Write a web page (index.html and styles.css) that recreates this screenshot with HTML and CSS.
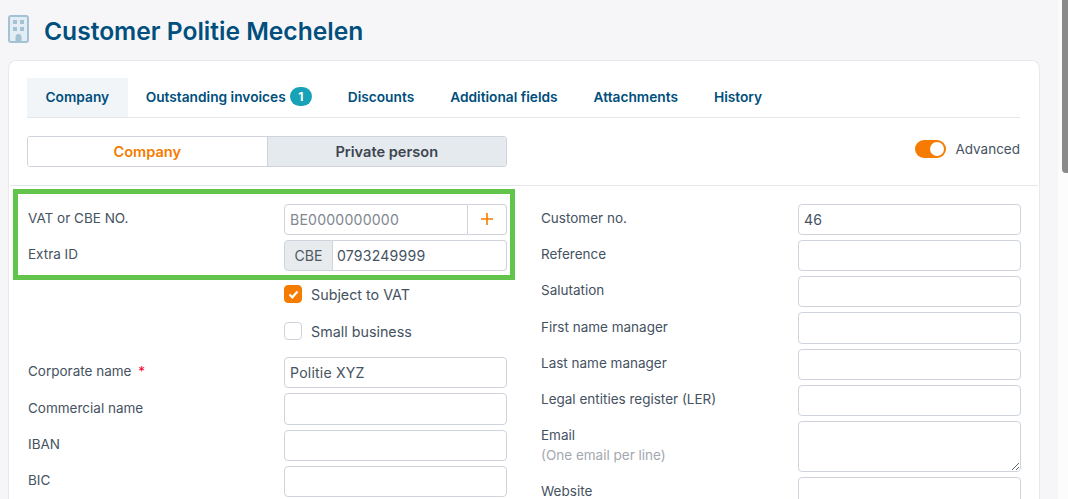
FILE: index.html
```html
<!DOCTYPE html>
<html lang="en">
<head>
<meta charset="utf-8">
<title>Customer Politie Mechelen</title>
<link rel="stylesheet" href="styles.css">
</head>
<body>
<div class="page">
  <main class="main">
    <header class="title-row">
      <svg class="title-icon" width="21" height="28" viewBox="0 0 21 28" aria-hidden="true">
        <rect x="1" y="1" width="19" height="26" rx="2" fill="#e3edf3" stroke="#a3c2d4" stroke-width="2"/>
        <rect x="5" y="5" width="4" height="4" fill="#a3c2d4"/>
        <rect x="12" y="5" width="4" height="4" fill="#a3c2d4"/>
        <rect x="5" y="12" width="4" height="4" fill="#a3c2d4"/>
        <rect x="12" y="12" width="4" height="4" fill="#a3c2d4"/>
        <path d="M7.500 27v-5a3 3 0 0 1 6 0v5z" fill="#a3c2d4"/>
      </svg>
      <h1 class="title">Customer Politie Mechelen</h1>
    </header>
    <section class="card">
      <div class="card-top">
        <nav class="tabs">
          <a class="tab tab-active">Company</a>
          <a class="tab">Outstanding invoices <span class="badge">1</span></a>
          <a class="tab">Discounts</a>
          <a class="tab">Additional fields</a>
          <a class="tab">Attachments</a>
          <a class="tab">History</a>
        </nav>
        <div class="type-row">
          <div class="segmented">
            <div class="segment segment-on">Company</div>
            <div class="segment segment-off">Private person</div>
          </div>
          <div class="advanced">
            <span class="switch"><span class="knob"></span></span>
            <span>Advanced</span>
          </div>
        </div>
      </div>
      <div class="form">
        <div class="col">
          <div class="row"><label class="label">VAT or CBE NO.</label>
            <div class="group"><input class="input join-right" placeholder="BE0000000000"><button class="plus"><svg width="12" height="12" viewBox="0 0 12 12"><path d="M6 0v12M0 6h12" stroke="#f57c00" stroke-width="1.600" fill="none"/></svg></button></div></div>
          <div class="row"><label class="label">Extra ID</label>
            <div class="group"><span class="prefix">CBE</span><input class="input join-left tight" value="0793249999"></div></div>
          <div class="check-row check-first"><span class="box box-on"><svg width="11" height="9" viewBox="0 0 11 9"><path d="M1.500 4.500l2.800 2.800 5.200-5.800" fill="none" stroke="#fff" stroke-width="2.200"/></svg></span><span>Subject to VAT</span></div>
          <div class="check-row check-second"><span class="box"></span><span>Small business</span></div>
          <div class="row"><label class="label">Corporate name <span class="req">*</span></label><input class="input" value="Politie XYZ"></div>
          <div class="row"><label class="label">Commercial name</label><input class="input"></div>
          <div class="row"><label class="label">IBAN</label><input class="input"></div>
          <div class="row"><label class="label">BIC</label><input class="input"></div>
        </div>
        <div class="col col-right">
          <div class="row"><label class="label">Customer no.</label><input class="input" value="46"></div>
          <div class="row"><label class="label">Reference</label><input class="input"></div>
          <div class="row"><label class="label">Salutation</label><input class="input"></div>
          <div class="row"><label class="label">First name manager</label><input class="input"></div>
          <div class="row"><label class="label">Last name manager</label><input class="input"></div>
          <div class="row"><label class="label">Legal entities register (LER)</label><input class="input"></div>
          <div class="row"><label class="label">Email<small class="hint">(One email per line)</small></label><textarea class="input area"></textarea></div>
          <div class="row"><label class="label">Website</label><input class="input"></div>
        </div>
        <div class="highlight"></div>
      </div>
    </section>
  </main>
  <div class="scrollbar"><div class="thumb"></div></div>
</div>
</body>
</html>
```
FILE: styles.css
```css
* { box-sizing: border-box; }
html, body { margin: 0; height: 499px; overflow: hidden; }
body { font-family: Inter, "Liberation Sans", sans-serif; font-size: 13.5px; color: #45525f; background: #f6f6f9; }
.page { display: flex; height: 499px; }
.main { width: 1050px; padding-left: 8px; flex: none; }
.title-row { display: flex; align-items: center; height: 60px; gap: 15px; }
.title-icon { flex: none; margin-bottom: 2px; }
.title { margin: 1px 0 0; font-size: 24.6px; font-weight: 600; color: #004f7c; line-height: 30px; }
.card { width: 1032px; height: 460px; background: #fff; border: 1px solid #e8eaee; border-bottom: 0; border-radius: 8px 8px 0 0; }
.card-top { padding: 17px 18px 18px; border-bottom: 1px solid #e4e6ea; margin: 0 1px; height: 125px; }
.tabs { display: flex; height: 40px; border-bottom: 1px solid #e4e7eb; margin: 0 0 18px -1px; }
.tab { display: flex; align-items: center; gap: 4px; padding: 0 18px 2px; font-size: 13.72px; font-weight: 600; color: #004f7c; height: 39px; }
.tab-active { background: #f2f5f8; padding: 0 18.500px 2px; }
.badge { display: inline-flex; justify-content: center; align-items: center; width: 22px; height: 19px; border-radius: 10px; background: #17a2b8; color: #fff; font-size: 12px; font-weight: 700; }
.type-row { display: flex; justify-content: space-between; align-items: flex-start; margin-left: -1px; }
.segmented { display: flex; width: 480px; height: 31px; border: 1px solid #cfd4dc; border-radius: 3px; overflow: hidden; font-size: 14.6px; font-weight: 600; }
.segment { flex: 1; display: flex; align-items: center; justify-content: center; }
.segment-on { color: #f57c00; background: #fff; border-right: 1px solid #cfd4dc; }
.segment-off { color: #3d4550; background: #e5eaee; }
.advanced { display: flex; align-items: center; gap: 9px; margin-top: 4px; height: 18px; }
.switch { display: flex; justify-content: flex-end; align-items: center; width: 31px; height: 18px; padding-right: 2px; background: #f57c00; border-radius: 9px; }
.knob { width: 14px; height: 14px; border-radius: 50%; background: #fff; }
.form { position: relative; display: flex; padding: 17.700px 18px 0 19px; }
.col { width: 479px; flex: none; }
.col-right { width: 480px; margin-left: 34px; }
.row { display: flex; align-items: flex-start; justify-content: space-between; margin-bottom: 5px; }
.label { display: block; padding-top: 6.300px; line-height: 16px; }
.req { color: #ff0033; margin-left: 3px; }
.hint { display: block; color: #a3a8ae; font-size: 13.5px; margin-top: 4px; }
.input { display: block; width: 223px; height: 31.25px; padding: 0 5px; border: 1px solid #cfd4dc; border-radius: 4px; font: 14.1px Inter, "Liberation Sans", sans-serif; color: #45525f; letter-spacing: 0.2px; background: #fff; outline: none; margin: 0; }
.input::placeholder { color: #7f8790; opacity: 1; }
.area { height: 51px; resize: both; }
.group { display: flex; width: 223px; height: 31.25px; }
.group .input { flex: 1; width: auto; min-width: 0; }
.join-right { border-radius: 4px 0 0 4px; }
.join-left { border-radius: 0 4px 4px 0; border-left: 0; }
.tight { padding-left: 4px; }
.plus { display: flex; align-items: center; justify-content: center; width: 39px; flex: none; padding: 0; border: 1px solid #cfd4dc; border-left: 0; border-radius: 0 4px 4px 0; background: #fff; }
.prefix { display: flex; align-items: center; justify-content: center; width: 49px; flex: none; background: #e8ebee; border: 1px solid #cfd4dc; border-radius: 4px 0 0 4px; font-size: 14.1px; color: #4f5963; }
.check-row { display: flex; align-items: center; gap: 9px; height: 18px; margin-left: 256px; font-size: 14.3px; }
.check-first { margin-top: 14px; margin-bottom: 19px; }
.check-second { margin-bottom: 17px; }
.box { display: flex; align-items: center; justify-content: center; width: 18px; height: 18px; border: 1px solid #cfd4dc; border-radius: 4px; background: #fff; }
.box-on { background: #f57c00; border-color: #f57c00; }
.highlight { position: absolute; left: 4px; top: 3px; width: 502px; height: 91px; border: 5px solid #62c44b; pointer-events: none; }
.scrollbar { flex: 1; display: flex; justify-content: flex-end; background: linear-gradient(to right, #f6f6f9 8px, #fcfcfc 8px); }
.thumb { width: 6px; height: 173px; background: #8a8a8a; border-radius: 0 0 0 4px; }
```
